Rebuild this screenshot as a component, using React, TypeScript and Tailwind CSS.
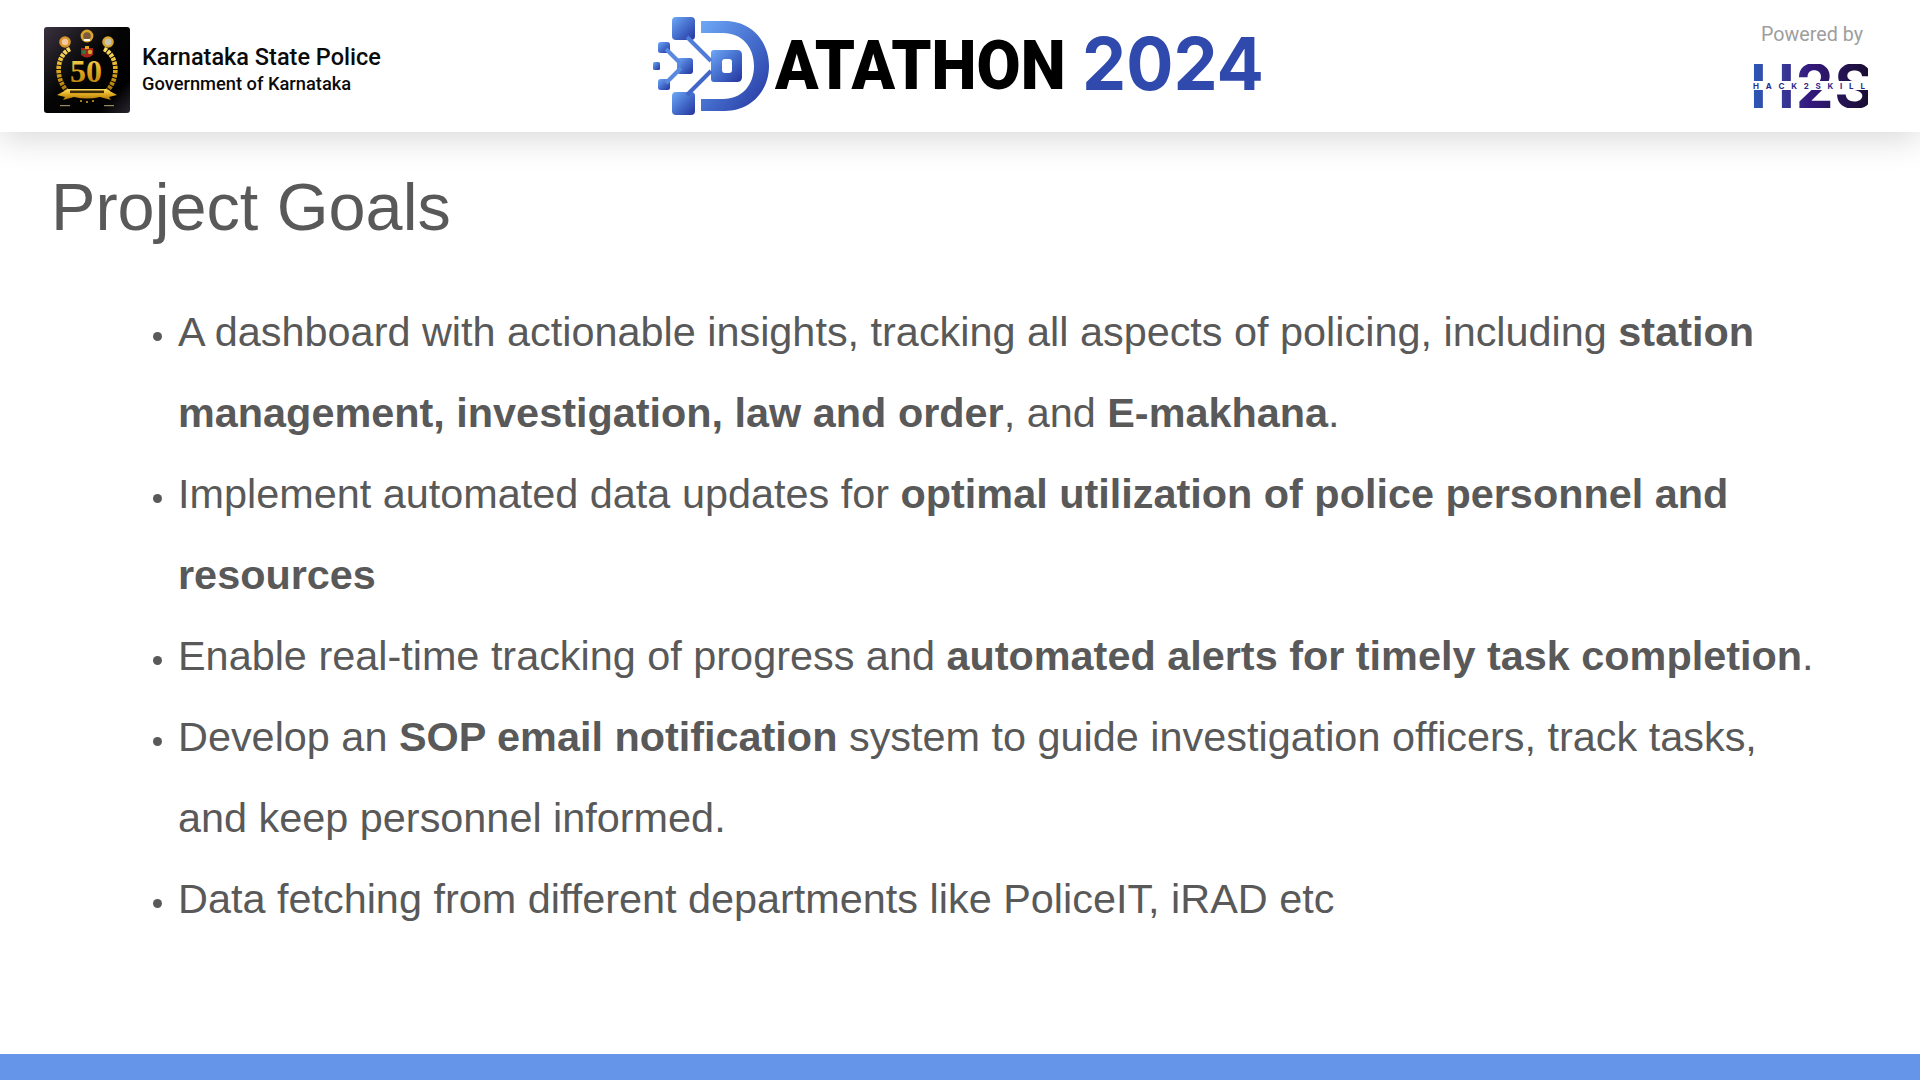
import React from "react";

const goals: React.ReactNode[] = [
  <>
    A dashboard with actionable insights, tracking all aspects of policing, including{" "}
    <b>station management, investigation, law and order</b>, and <b>E-makhana</b>.
  </>,
  <>
    Implement automated data updates for <b>optimal utilization of police personnel and resources</b>
  </>,
  <>
    Enable real-time tracking of progress and <b>automated alerts for timely task completion</b>.
  </>,
  <>
    Develop an <b>SOP email notification</b> system to guide investigation officers, track tasks, and keep personnel informed.
  </>,
  <>Data fetching from different departments like PoliceIT, iRAD etc</>,
];

const Emblem = () => (
  <svg width="86" height="86" viewBox="0 0 86 86" className="shrink-0">
    <defs>
      <linearGradient id="emblemBg" x1="0" y1="0" x2="1" y2="1">
        <stop offset="0" stopColor="#3a3240" />
        <stop offset="0.45" stopColor="#050505" />
        <stop offset="0.8" stopColor="#000000" />
        <stop offset="1" stopColor="#2a2630" />
      </linearGradient>
      <linearGradient id="gold" x1="0" y1="0" x2="0" y2="1">
        <stop offset="0" stopColor="#ffe066" />
        <stop offset="0.5" stopColor="#e0a81c" />
        <stop offset="1" stopColor="#a8740f" />
      </linearGradient>
    </defs>
    <rect width="86" height="86" rx="3" fill="url(#emblemBg)" />
    <circle cx="21" cy="15" r="5.8" fill="#d9952a" />
    <circle cx="21" cy="15" r="3.2" fill="#f2c9a0" />
    <circle cx="43" cy="9" r="6.4" fill="#d9a52a" />
    <circle cx="43" cy="9" r="3.8" fill="#7d5a3e" />
    <path d="M40 12 h6 v2 h-6z" fill="#ffffff" />
    <circle cx="64" cy="15" r="5.8" fill="#d9a52a" />
    <circle cx="64" cy="15" r="3.4" fill="#c9c4b0" />
    <path d="M37 21 h12 v7 q-6 5 -12 0z" fill="#a3241c" />
    <circle cx="40" cy="25" r="2.2" fill="#2d7a3e" />
    <circle cx="46" cy="25" r="2.2" fill="#d9a52a" />
    <path d="M41 19 h4 v3 h-4z" fill="#e0a81c" />
    {/* laurel */}
    <path d="M26 22 C13 28 10 50 23 64" fill="none" stroke="url(#gold)" strokeWidth="4.6" strokeDasharray="3.2 1" />
    <path d="M60 22 C73 28 76 50 63 64" fill="none" stroke="url(#gold)" strokeWidth="4.6" strokeDasharray="3.2 1" />
    <text x="42" y="55" textAnchor="middle" fontFamily="Liberation Serif, serif" fontWeight="700" fontSize="32" fill="url(#gold)">
      50
    </text>
    <path d="M13 68 L24 62 L62 62 L73 68 L65 70 L67 73 L56 70 Q43 73 30 70 L19 73 L21 70z" fill="url(#gold)" />
    <rect x="26" y="63.5" width="34" height="2.6" fill="#3b2a08" />
    <circle cx="37" cy="74" r="1" fill="#d9a52a" />
    <circle cx="43" cy="75" r="1" fill="#d9a52a" />
    <circle cx="49" cy="74" r="1" fill="#d9a52a" />
    <rect x="16" y="78" width="10" height="1.2" fill="#9a8a5a" />
    <rect x="60" y="78" width="10" height="1.2" fill="#9a8a5a" />
  </svg>
);

const DLogo = () => (
  <svg width="116" height="98" viewBox="0 0 116 98" className="shrink-0">
    <defs>
      <linearGradient id="dGrad" x1="0" y1="0" x2="1" y2="1">
        <stop offset="0" stopColor="#6ea8f7" />
        <stop offset="0.55" stopColor="#4168c8" />
        <stop offset="1" stopColor="#25339c" />
      </linearGradient>
    </defs>
    <g fill="url(#dGrad)">
      <rect x="19" y="0" width="23" height="23" rx="4" />
      <rect x="19" y="75" width="23" height="23" rx="4" />
      <rect x="5" y="25" width="12" height="11" rx="2.5" />
      <rect x="5" y="62" width="12" height="11" rx="2.5" />
      <rect x="0" y="45" width="7" height="8" rx="1.5" />
      <rect x="24" y="41" width="16" height="16" rx="3" />
      <path d="M48 4 H72 C98 4 116 24 116 49 C116 74 98 94 72 94 H48 V82 H70 C89 82 101 68 101 49 C101 30 89 16 70 16 H48z" />
      <path
        fillRule="evenodd"
        clipRule="evenodd"
        d="M61 33 H84 Q89 33 89 38 V60 Q89 65 84 65 H61 Q58 65 58 62 V36 Q58 33 61 33z M72 42 Q69 42 69 45 V53 Q69 56 72 56 H76 Q79 56 79 53 V45 Q79 42 76 42z"
      />
    </g>
    <g strokeWidth="4" fill="none">
      <path d="M34 20 L58 44" stroke="#4f7cd8" />
      <path d="M34 78 L58 54" stroke="#4168c8" />
      <path d="M13 32 L28 47" stroke="#5a8ae0" />
      <path d="M13 66 L28 51" stroke="#5a8ae0" />
    </g>
  </svg>
);

export default function App() {
  return (
    <div className="flex h-screen w-full flex-col overflow-hidden bg-white font-['Liberation_Sans',Arial,sans-serif] text-[#595959]">
      <header className="relative z-10 flex h-[132px] shrink-0 items-center bg-white pl-11 pr-[48px] shadow-[0_6px_32px_rgba(0,0,0,0.16)]">
        <div className="flex w-[609px] items-center gap-3 pt-[8px]">
          <Emblem />
          <div className="-mt-[2px] font-['Roboto',sans-serif] font-medium text-[#0b0b0b]">
            <div className="text-[23.5px] leading-7">Karnataka State Police</div>
            <div className="mt-[1px] text-[18.3px] leading-6">Government of Karnataka</div>
          </div>
        </div>
        <div className="flex items-center">
          <DLogo />
          <span className="ml-[6px] inline-block w-[288px] origin-left -translate-y-[1px] scale-x-[0.927] font-['Roboto',sans-serif] text-[69px] leading-none font-black whitespace-nowrap text-black">
            ATATHON
          </span>
          <span className="ml-[19px] inline-block origin-left -translate-y-[3px] scale-x-[0.96] font-['Inter',sans-serif] text-[73px] leading-none font-bold text-[#2f49ac]">
            2024
          </span>
        </div>
        <div className="ml-auto flex w-[120px] flex-col items-center">
          <div className="mt-[-4px] font-['Roboto',sans-serif] text-[19.7px] leading-6 whitespace-nowrap text-[#9e9e9e]">Powered by</div>
          <div className="relative mt-[17px] -mb-[3px] ml-[-6px] h-[44px] w-[118px]">
            <div className="bg-gradient-to-r from-[#2a5cb8] via-[#35197e] to-[#190d33] bg-clip-text font-['Inter',sans-serif] text-[60px] leading-[44px] font-bold tracking-[1px] text-transparent">
              H2S
            </div>
            <div className="absolute top-[17px] left-0 flex h-[9px] w-full items-center justify-between bg-white px-[3px] font-['Inter',sans-serif] text-[8px] leading-none font-bold text-[#2b2a8c]">
              {"HACK2SKILL".split("").map((c, i) => (
                <span key={i}>{c}</span>
              ))}
            </div>
          </div>
        </div>
      </header>

      <main className="flex-1 pt-[37px] pl-[51px]">
        <h1 className="text-[66.6px] leading-[76px] font-normal">Project Goals</h1>
        <ul className="mt-[47px] w-[1769px] list-disc pl-[127px] text-[41.4px] leading-[81px] marker:text-[30px]">
          {goals.map((goal, i) => (
            <li key={i}>{goal}</li>
          ))}
        </ul>
      </main>

      <footer className="h-[26px] shrink-0 bg-[#6495e8]" />
    </div>
  );
}
